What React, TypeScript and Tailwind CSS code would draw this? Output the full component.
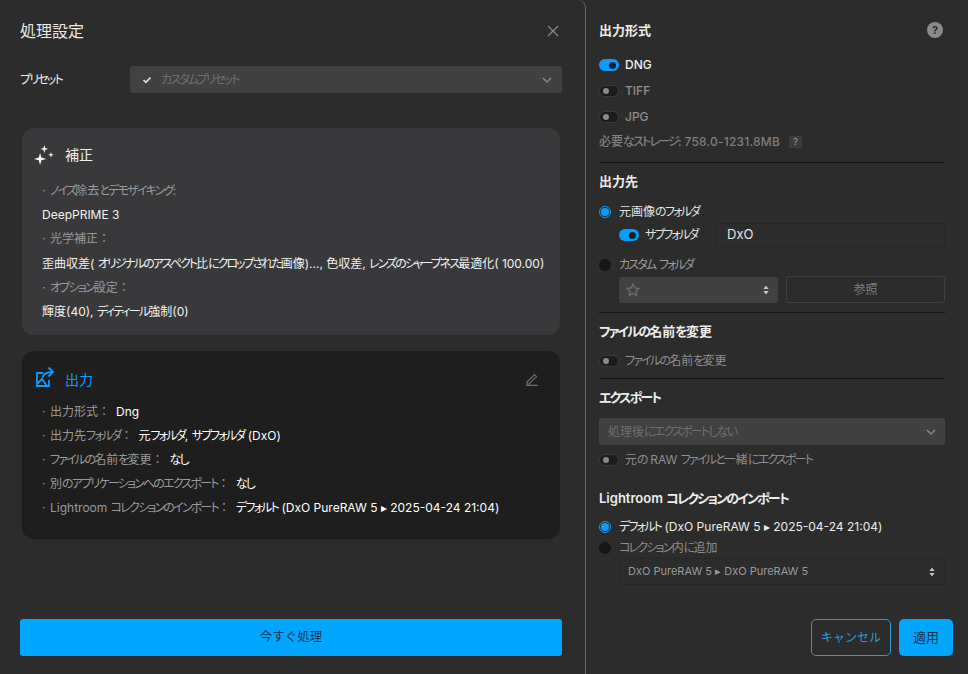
import React from "react";

function T({ children, tight }: { children: string; tight?: boolean }) {
  const parts = children.split(/([\u3040-\u30ff]+|：)/);
  return (
    <>
      {parts.map((p, i) => {
        if (!p) return null;
        if (p === "：") return <span key={i} className="[font-feature-settings:normal]">：</span>;
        if (/^[\u3040-\u30ff]/.test(p))
          return <span key={i} className={tight ? "tracking-[-2px]" : "tracking-[-1.8px]"}>{p}</span>;
        return <span key={i}>{p}</span>;
      })}
    </>
  );
}

function Toggle({ on }: { on?: boolean }) {
  return on ? (
    <span className="flex h-[12px] w-[20px] shrink-0 items-center justify-end rounded-full bg-[#0a9dff] pr-[3px]">
      <span className="h-[7px] w-[7px] rounded-full bg-[#14202b]" />
    </span>
  ) : (
    <span className="flex h-[12px] w-[20px] shrink-0 items-center rounded-full border border-[#3a3a3a] bg-[#1c1c1c] pl-[3px]">
      <span className="h-[6px] w-[6px] rounded-full bg-[#8a8a8a]" />
    </span>
  );
}

function Radio({ on }: { on?: boolean }) {
  return on ? (
    <span className="flex h-[12px] w-[12px] shrink-0 items-center justify-center rounded-full border border-[#0a9dff]">
      <span className="h-[8px] w-[8px] rounded-full bg-[#0a9dff]" />
    </span>
  ) : (
    <span className="h-[12px] w-[12px] shrink-0 rounded-full bg-[#161616]" />
  );
}

function Chevron({ className }: { className: string }) {
  return (
    <svg width="10" height="6" viewBox="0 0 10 6" fill="none" className={className}>
      <path d="M1 1l4 4 4-4" stroke="currentColor" strokeWidth="1.4" />
    </svg>
  );
}

function Updown() {
  return (
    <svg width="6" height="10" viewBox="0 0 6 10" className="shrink-0 text-[#c4c4c4]">
      <path d="M3 0.5L5.6 4H0.4zM3 9.5L0.4 6h5.2z" fill="currentColor" />
    </svg>
  );
}

function Bullet({ label, value, tall }: { label: string; value?: string; tall?: boolean }) {
  return (
    <div className={`flex ${tall ? "h-[24.2px]" : "h-[24px]"} items-center whitespace-pre text-[#9a9a9a]`}>
      <span className="w-[8px] shrink-0">·</span>
      <span><T>{label}</T></span>
      {value && <span className="ml-[6px] text-white"><T>{value}</T></span>}
    </div>
  );
}

function Heading({ children, className }: { children: string; className?: string }) {
  return <div className={`text-[13px] font-semibold leading-[18px] text-[#ececec] ${className ?? ""}`}><T>{children}</T></div>;
}

export default function App() {
  return (
    <div
      className="flex h-[674px] w-[968px] overflow-hidden bg-[#2c2c2c] text-[12px] [font-feature-settings:'palt']"
      style={{ fontFamily: "Inter, 'Noto Sans CJK JP', sans-serif" }}
    >
      {/* Left */}
      <div className="flex h-full w-[586px] shrink-0 flex-col rounded-tr-[8px] border-r border-[#6a6a6e] pb-[18px] pl-[20px] pr-[23px] pt-[20px]">
        <div className="flex h-[22px] items-center justify-between">
          <span className="text-[16px] text-[#e8e8e8]">処理設定</span>
          <svg width="12" height="12" viewBox="0 0 12 12" fill="none" className="mr-[3px] text-[#8a8a8a]">
            <path d="M1 1l10 10M11 1L1 11" stroke="currentColor" strokeWidth="1.2" />
          </svg>
        </div>

        <div className="mt-[24px] flex h-[27px] items-center">
          <span className="w-[110px] text-[#f0f0f0]"><T>プリセット</T></span>
          <div className="flex h-[27px] flex-1 items-center rounded-[3px] bg-[#414141] pl-[12px] pr-[10px]">
            <svg width="10" height="8" viewBox="0 0 10 8" fill="none" className="text-[#e6e6e6]">
              <path d="M1.5 4l2.4 2.4L8.5 1.5" stroke="currentColor" strokeWidth="1.6" />
            </svg>
            <span className="ml-[9px] flex-1 text-[#6f6f6f]"><T>カスタムプリセット</T></span>
            <Chevron className="text-[#8a8a8a]" />
          </div>
        </div>

        <div className="mx-[2px] mt-[35px] h-[207px] rounded-[12px] bg-[#39393b] pl-[20px] pt-[11px]">
          <div className="flex h-[30px] items-center">
            <svg width="22" height="24" viewBox="0 0 20 22" fill="#ffffff" className="-ml-[9px]">
              <path d="M6.400 10l1.200 4.300 4.300 1.200-4.300 1.200L6.400 21l-1.200-4.300L.9 15.500l4.300-1.200z" />
              <path d="M10.300 2.800l.8 2.800 2.800.8-2.800.8-.8 2.800-.8-2.800-2.800-.8 2.800-.8z" />
              <path d="M16.400 9.100l.6 2.100 2.100.6-2.100.6-.6 2.100-.6-2.100-2.100-.6 2.100-.6z" />
            </svg>
            <span className="ml-[10px] text-[14px] text-[#f0f0f0]">補正</span>
          </div>
          <div className="mt-[10px]">
            <Bullet tall label="ノイズ除去とデモザイキング:" />
            <div className="flex h-[24.2px] items-center text-[#f2f2f2]">DeepPRIME 3</div>
            <Bullet tall label="光学補正：" />
            <div className="flex h-[24.2px] items-center whitespace-pre text-[#f2f2f2]"><span><T tight>歪曲収差( オリジナルのアスペクト比にクロップされた画像)..., 色収差, レンズのシャープネス最適化( 100.00)</T></span></div>
            <Bullet tall label="オプション設定：" />
            <div className="flex h-[24.2px] items-center text-[#f2f2f2]"><span><T>輝度(40), ディティール強制(0)</T></span></div>
          </div>
        </div>

        <div className="mx-[2px] mt-[16px] h-[188px] rounded-[12px] bg-[#1e1e1e] pl-[20px] pr-[20px] pt-[13px]">
          <div className="flex h-[30px] items-center">
            <svg width="24" height="24" viewBox="0 0 24 24" fill="none" stroke="#0a9dff" strokeWidth="1.8" className="-ml-[10px] -mt-[2px]">
              <path d="M11 7H5v13h12v-6" />
              <path d="M5 18l5-5 5 7" />
              <path d="M10.500 11.500c1-3.500 4-5.500 10-5.500" />
              <path d="M16.500 1.500l4.500 4.500-4.500 4.500" />
            </svg>
            <span className="ml-[9px] flex-1 text-[14px] text-[#0a9dff]">出力</span>
            <svg width="14" height="14" viewBox="0 0 14 14" fill="none" stroke="#6b6b6b" strokeWidth="1.2" className="mr-[1px]">
              <path d="M2 10l7.500-7.500 2 2L4 12H2zM1 13.300h12" />
            </svg>
          </div>
          <div className="mt-[6px]">
            <Bullet label="出力形式：" value="Dng" />
            <Bullet label="出力先フォルダ：" value="元フォルダ, サブフォルダ (DxO)" />
            <Bullet label="ファイルの名前を変更：" value="なし" />
            <Bullet label="別のアプリケーションへのエクスポート：" value="なし" />
            <Bullet label="Lightroom コレクションのインポート：" value="デフォルト (DxO PureRAW 5 ▸ 2025-04-24 21:04)" />
          </div>
        </div>

        <button className="mt-auto h-[37px] w-full rounded-[3px] bg-[#00a6ff] text-[12.5px] text-[#1a3345] [font-feature-settings:normal]">今すぐ処理</button>
      </div>

      {/* Right */}
      <div className="flex h-full flex-1 flex-col pb-[18px] pl-[13px] pr-[15px] pt-[21px]">
        <div className="mr-[10px] flex h-[18px] items-center justify-between">
          <Heading>出力形式</Heading>
          <span className="flex h-[16px] w-[16px] items-center justify-center rounded-full bg-[#8a8a8a] text-[11px] font-bold text-[#2c2c2c]">?</span>
        </div>
        <div className="mt-[17px] flex h-[18px] items-center gap-[6px] font-medium text-[#f0f0f0]"><Toggle on />DNG</div>
        <div className="mt-[8px] flex h-[18px] items-center gap-[6px] font-medium text-[#8e8e8e]"><Toggle />TIFF</div>
        <div className="mt-[8px] flex h-[18px] items-center gap-[6px] font-medium text-[#8e8e8e]"><Toggle />JPG</div>
        <div className="mt-[7px] flex h-[18px] items-center text-[#7f7f7f]">
          <span className="font-medium"><T>必要なストレージ:</T></span>
          <span className="ml-[3px] font-medium tracking-[0.2px]">758.0-1231.8MB</span>
          <span className="ml-[9px] flex h-[12px] w-[13px] items-center justify-center rounded-[1px] bg-[#3c3c3c] text-[9px] text-[#a0a0a0]">?</span>
        </div>
        <div className="mr-[8px] mt-[11px] h-px bg-[#141414]" />

        <Heading className="mt-[9px]">出力先</Heading>
        <div className="mt-[13px] flex h-[18px] items-center gap-[8px] text-[#e4e4e4]"><Radio on /><span><T>元画像のフォルダ</T></span></div>
        <div className="mr-[8px] mt-[2px] flex h-[24px] items-center pl-[20px]">
          <Toggle on />
          <span className="ml-[6px] w-[70px] text-[#e4e4e4]"><T>サブフォルダ</T></span>
          <div className="flex h-[24px] flex-1 items-center rounded-[3px] border border-[#262626] pl-[11px] text-[13px] text-[#e4e4e4]">DxO</div>
        </div>
        <div className="mt-[9px] flex h-[18px] items-center gap-[8px] text-[#9a9a9a]"><Radio /><span><T>カスタム フォルダ</T></span></div>
        <div className="mr-[8px] mt-[2px] flex h-[27px] items-center gap-[8px] pl-[20px]">
          <div className="flex h-[26px] w-[159px] items-center justify-between rounded-[3px] bg-[#414141] pl-[7px] pr-[9px]">
            <svg width="14" height="14" viewBox="0 0 14 14" fill="none" stroke="#6e6e6e" strokeWidth="1.3">
              <path d="M7 1.200l1.800 3.800 4.100.5-3 2.900.8 4.100L7 10.500l-3.700 2 .8-4.100-3-2.900 4.100-.5z" />
            </svg>
            <Updown />
          </div>
          <div className="flex h-[27px] flex-1 items-center justify-center rounded-[3px] border border-[#3f3f3f] text-[#7f7f7f]">参照</div>
        </div>
        <div className="mr-[8px] mt-[9px] h-px bg-[#141414]" />

        <Heading className="mt-[9px]">ファイルの名前を変更</Heading>
        <div className="mt-[12px] flex h-[18px] items-center gap-[6px] text-[#8e8e8e]"><Toggle /><span><T>ファイルの名前を変更</T></span></div>
        <div className="mr-[8px] mt-[8px] h-px bg-[#141414]" />

        <Heading className="mt-[9px]">エクスポート</Heading>
        <div className="mr-[8px] mt-[12px] flex h-[27px] items-center justify-between rounded-[3px] bg-[#414141] pl-[9px] pr-[9px] text-[#6f6f6f]">
          <span><T>処理後にエクスポートしない</T></span>
          <Chevron className="text-[#8a8a8a]" />
        </div>
        <div className="mt-[6px] flex h-[18px] items-center gap-[6px] text-[#8e8e8e]"><Toggle /><span><T>元の RAW ファイルと一緒にエクスポート</T></span></div>

        <Heading className="mt-[20px]">Lightroom コレクションのインポート</Heading>
        <div className="mt-[11px] flex h-[18px] items-center gap-[8px] text-[#ececec]"><Radio on /><span><T>デフォルト (DxO PureRAW 5 ▸ 2025-04-24 21:04)</T></span></div>
        <div className="mt-[3px] flex h-[18px] items-center gap-[8px] text-[#8e8e8e]"><Radio /><span><T>コレクション内に追加</T></span></div>
        <div className="ml-[20px] mr-[8px] mt-[1px] flex h-[27px] items-center justify-between rounded-[3px] border border-[#262626] pl-[8px] pr-[9px] text-[11px] text-[#9a9a9a]">
          DxO PureRAW 5 ▸ DxO PureRAW 5
          <Updown />
        </div>

        <div className="mt-auto flex justify-end gap-[8px] [font-feature-settings:normal]">
          <button className="h-[37px] w-[80px] rounded-[5px] border border-[#2a9ad8] text-[#2a9ad8]">キャンセル</button>
          <button className="h-[37px] w-[54px] rounded-[5px] bg-[#00a6ff] text-[13px] text-[#1a3345]">適用</button>
        </div>
      </div>
    </div>
  );
}
